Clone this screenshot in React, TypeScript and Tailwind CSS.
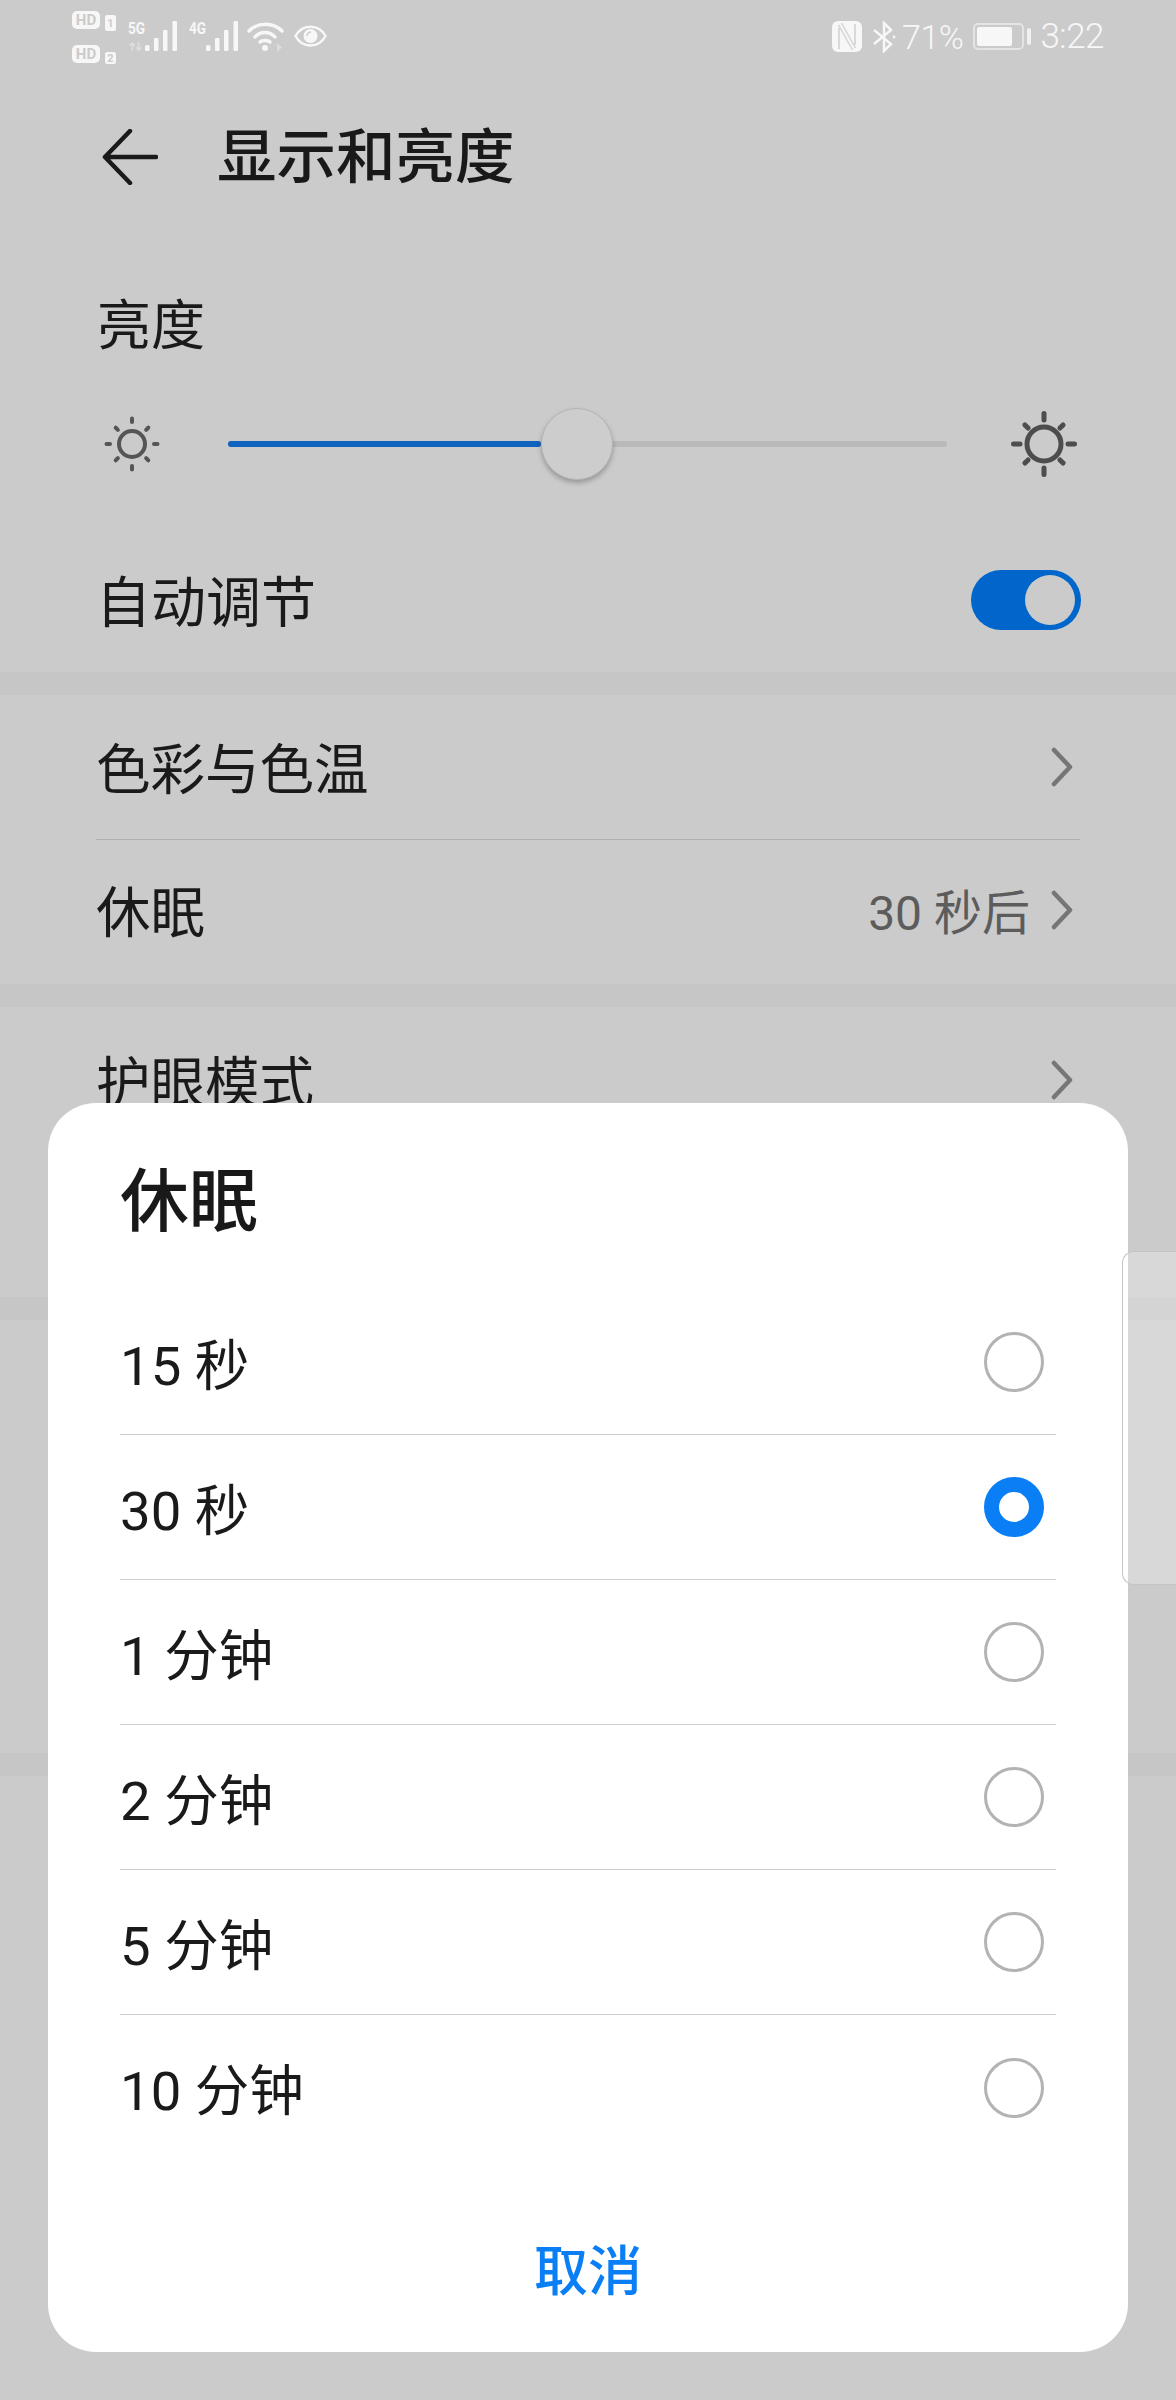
const cjk = "font-['Roboto','Noto_Sans_CJK_SC',sans-serif]";

function Sun({ big }: { big?: boolean }) {
  const rays = [0, 45, 90, 135, 180, 225, 270, 315];
  if (big) {
    return (
      <svg width="66" height="66" viewBox="0 0 66 66" fill="none" stroke="#4d4d4d" strokeWidth="5" strokeLinecap="round">
        <circle cx="33" cy="33" r="17" />
        {rays.map((r) => (
          <line key={r} x1="33" y1={r % 90 === 0 ? 2.5 : 6} x2="33" y2={r % 90 === 0 ? 9 : 10.5} transform={`rotate(${r} 33 33)`} />
        ))}
      </svg>
    );
  }
  return (
    <svg width="56" height="56" viewBox="0 0 56 56" fill="none" stroke="#555555" strokeWidth="4" strokeLinecap="round">
      <circle cx="28" cy="28" r="13" />
      {rays.map((r) => (
        <line key={r} x1="28" y1={r % 90 === 0 ? 2.5 : 5} x2="28" y2={r % 90 === 0 ? 6 : 8} transform={`rotate(${r} 28 28)`} />
      ))}
    </svg>
  );
}

function Chevron() {
  return (
    <svg width="22" height="40" viewBox="0 0 22 40" fill="none" stroke="#767676" strokeWidth="4.5" strokeLinecap="round" strokeLinejoin="round">
      <path d="M3 3 L19 20 L3 37" />
    </svg>
  );
}

function Bars() {
  return (
    <svg width="32" height="30" viewBox="0 0 32 30" fill="#f7f7f7">
      <rect x="0" y="24" width="4.5" height="6" rx="1.5" />
      <rect x="9" y="17" width="4.5" height="13" rx="1" />
      <rect x="18" y="9" width="4.5" height="21" rx="1" />
      <rect x="27.500" y="0" width="4.5" height="30" rx="1" />
    </svg>
  );
}

function Network({ label, arrows }: { label: string; arrows?: boolean }) {
  return (
    <div className="w-[49px] h-[30px] mt-[10px] flex">
      <div className="w-[17px] flex flex-col">
        <span className="h-[14px] text-[17px] leading-[14px] font-bold origin-left scale-x-[0.8] font-['Roboto',sans-serif]">{label}</span>
        {arrows && (
          <svg className="mt-[7px]" width="15" height="10" viewBox="0 0 15 10" fill="none" stroke="#dcdcdc" strokeWidth="2">
            <path d="M4 10 V1 M1 4 L4 1 L7 4 M11 0 V9 M8 6 L11 9 L14 6" />
          </svg>
        )}
      </div>
      <Bars />
    </div>
  );
}

function HdBadge({ n, second }: { n: string; second?: boolean }) {
  return (
    <div className="flex items-start gap-[5px]">
      <div className="w-[28px] h-[18px] rounded-[5px] bg-[#f7f7f7] flex items-center justify-center text-[#cbcbcb] text-[15px] leading-none font-bold font-['Roboto',sans-serif]">
        HD
      </div>
      <div className={`w-[11px] rounded-[2px] bg-[#f7f7f7] flex items-center justify-center text-[#cbcbcb] text-[11px] leading-none font-bold font-['Roboto',sans-serif] ${second ? "h-[12px] mt-[7px]" : "h-[16px] mt-[4px]"}`}>
        {n}
      </div>
    </div>
  );
}

function StatusBar() {
  return (
    <div className="h-[72px] pl-[72px] pr-[72px] flex justify-between text-[#f7f7f7]">
      <div className="flex items-start pt-[11px]">
        <div className="flex flex-col gap-[14px]">
          <HdBadge n="1" />
          <HdBadge n="2" second />
        </div>
        <div className="ml-[12px]">
          <Network label="5G" arrows />
        </div>
        <div className="ml-[12px]">
          <Network label="4G" />
        </div>
        <svg className="ml-[9px] mt-[11px]" width="38" height="30" viewBox="0 0 38 30" fill="none" stroke="#f7f7f7" strokeWidth="3.500" strokeLinecap="round">
          <path d="M2 9 C11 0 26 0 35 9" />
          <path d="M8 15 C13 9 23 9 28 15" />
          <path d="M13 20 C15 18 21 18 23 20" />
          <circle cx="18" cy="26" r="3" fill="#f7f7f7" stroke="none" />
          <path d="M30 21 L35 25.500 L30 30 Z" fill="#dcdcdc" stroke="none" />
        </svg>
        <svg className="ml-[9px] mt-[14px]" width="33" height="22" viewBox="0 0 33 22" fill="none" stroke="#f7f7f7">
          <path d="M1.5 11 C8 -1.500 25 -1.500 31.500 11 C25 23.500 8 23.500 1.500 11 Z" strokeWidth="2.500" />
          <circle cx="16.500" cy="11" r="7" fill="#f7f7f7" stroke="none" />
          <path d="M13 11 A4 4 0 0 1 17 7" stroke="#cbcbcb" strokeWidth="1.500" />
        </svg>
      </div>
      <div className="flex items-center mt-[1px]">
        <svg width="30" height="31" viewBox="0 0 30 31">
          <rect width="30" height="31" rx="6" fill="#f7f7f7" />
          <path d="M8 3 L22 28" stroke="#d6d6d6" strokeWidth="5" fill="none" />
          <path d="M8 3 L22 28" stroke="#f7f7f7" strokeWidth="2" fill="none" />
          <path d="M7 7 V28 M23 3 V24" stroke="#d0d0d0" strokeWidth="1.500" fill="none" />
        </svg>
        <svg className="ml-[11px]" width="24" height="32" viewBox="0 0 24 32" fill="none" stroke="#f7f7f7" strokeWidth="2.500">
          <path d="M1 9 L18 23 L11 30 V2 L18 9 L1 23" />
          <path d="M20 14 L23 16 L20 18 Z" fill="#f7f7f7" stroke="none" />
        </svg>
        <span className="ml-[5px] text-[34px] leading-none font-light tracking-[-0.5px] font-['Roboto',sans-serif]">71%</span>
        <div className="ml-[10px] w-[51px] h-[27px] rounded-[5px] border-2 border-[#e4e4e4] p-[2px]">
          <div className="h-full w-[35px] rounded-[2px] bg-[#f7f7f7]" />
        </div>
        <div className="ml-[3px] w-[4px] h-[17px] rounded-[2px] bg-[#f0f0f0]" />
        <span className="ml-[9px] text-[35px] leading-none font-light tracking-[-0.5px] font-['Roboto',sans-serif]">3:22</span>
      </div>
    </div>
  );
}

function Row({ label, value, className }: { label: string; value?: string; className: string }) {
  return (
    <div className={`mx-24 flex items-center justify-between ${className}`}>
      <span className="text-[54.5px] leading-none text-[#1a1a1a] mt-[7px]">{label}</span>
      <div className="flex items-center gap-[21px] pr-[7px]">
        {value && <span className="text-[48px] leading-none text-[#5c5c5c] mt-[7px]">{value}</span>}
        <Chevron />
      </div>
    </div>
  );
}

function Band() {
  return <div className="h-[23px] bg-[#c6c6c6]" />;
}

function Settings() {
  return (
    <div>
      <StatusBar />
      <div className="h-[166px] pl-[102px] flex items-center">
        <svg className="mt-[3px]" width="56" height="56" viewBox="0 0 56 56" fill="none" stroke="#1a1a1a" strokeWidth="4.500" strokeLinecap="round" strokeLinejoin="round">
          <path d="M28 2 L3 28 L28 54 M3 28 H54" />
        </svg>
        <h1 className="ml-[59px] mt-[8px] text-[59.500px] leading-none font-medium text-[#191919]">显示和亮度</h1>
      </div>
      <div className="pl-[97px] text-[54px] leading-none text-[#1a1a1a] mt-[62px]">亮度</div>
      <div className="mt-[57px] pl-[104px] pr-[99px] flex items-center">
        <Sun />
        <div className="relative flex-1 ml-[68px] mr-[64px] h-[6px] rounded-full bg-[#b9b9b9]">
          <div className="h-full w-[43.6%] rounded-full bg-[#0f62bd]" />
          <div className="absolute left-[43.6%] top-[-33px] w-[72px] h-[72px] rounded-full bg-[#cdcdcd] border border-[#b5b5b5] shadow-[0_3px_5px_rgba(0,0,0,0.25)]" />
        </div>
        <Sun big />
      </div>
      <div className="mx-24 h-[137px] mt-[58px] flex items-center justify-between">
        <span className="text-[55px] leading-none text-[#1a1a1a]">自动调节</span>
        <div className="w-[110px] h-[60px] mb-[7px] mr-[-1px] rounded-full bg-[#0066cc] flex items-center justify-end pr-[6px]">
          <div className="w-[50px] h-[50px] rounded-full bg-[#cbcbcb]" />
        </div>
      </div>
      <Band />
      <Row label="色彩与色温" className="h-[145px] border-b border-[#b0b0b0]" />
      <Row label="休眠" value="30 秒后" className="h-[144px] pb-[4px]" />
      <Band />
      <Row label="护眼模式" className="h-[146px]" />
    </div>
  );
}

const options = ["15 秒", "30 秒", "1 分钟", "2 分钟", "5 分钟", "10 分钟"];

function SleepDialog() {
  return (
    <div className="absolute left-12 right-12 top-[1103px] h-[1249px] rounded-[48px] bg-white px-[72px]">
      <div className="h-[187px] pt-[66px] text-[69px] leading-[68px] font-medium text-[#191919]">休眠</div>
      {options.map((o, i) => (
        <div key={o} className={`h-[145px] flex items-center justify-between ${i < 5 ? "border-b border-[#cfcfcf]" : ""}`}>
          <span className="text-[54.5px] leading-none text-[#1a1a1a] mt-[8px]">{o}</span>
          {i === 1 ? (
            <div className="w-[60px] h-[60px] mr-3 rounded-full border-[15px] border-[#0a7ff5] bg-white" />
          ) : (
            <div className="w-[60px] h-[60px] mr-3 rounded-full border-[3px] border-[#b3b3b3] bg-white" />
          )}
        </div>
      ))}
      <div className="pt-[86px] text-center text-[54px] leading-none font-medium text-[#0a7ff5]">取消</div>
    </div>
  );
}

export default function App() {
  return (
    <div className={`relative w-[1176px] h-[2400px] overflow-hidden bg-[#cbcbcb] ${cjk}`}>
      <Settings />
      <div className="absolute top-[1297px] inset-x-0 h-[23px] bg-[#c6c6c6]" />
      <div className="absolute top-[1753px] inset-x-0 h-[23px] bg-[#c6c6c6]" />
      <SleepDialog />
      <div className="absolute right-0 top-[1251px] w-[54px] h-[334px] rounded-l-[12px] border border-r-0 border-[#c4c4c4] bg-white/25" />
    </div>
  );
}
